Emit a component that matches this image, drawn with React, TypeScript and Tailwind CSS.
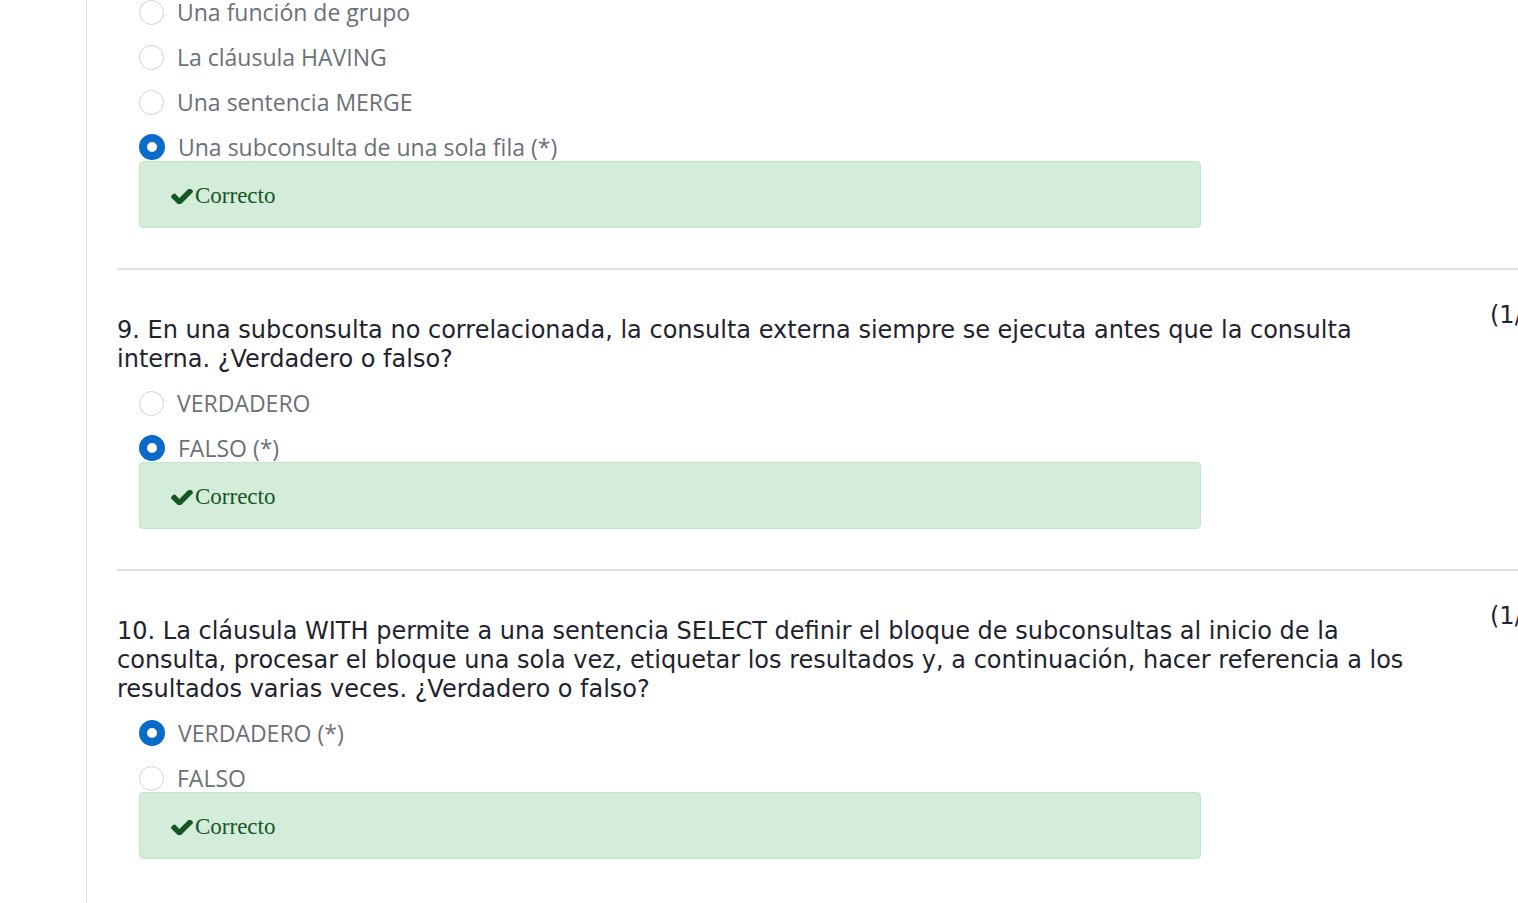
import React from 'react';

type Option = { label: string; checked?: boolean };

const qFont = { fontFamily: '"DejaVu Sans", Verdana, sans-serif' };
const optFont = { fontFamily: '"Open Sans", "Liberation Sans", sans-serif' };

const Radio = ({ checked }: { checked?: boolean }) =>
  checked ? (
    <span className="w-[26px] h-[26px] rounded-full border-[8px] border-[#0b6bcb] bg-white shrink-0" />
  ) : (
    <span className="w-[25px] h-[25px] rounded-full border-[1.5px] border-[#d3d3d3] bg-white shrink-0" />
  );

const OptionRow = ({ label, checked }: Option) => (
  <div className="flex items-center h-[28px] mt-[17px] pl-[22px] gap-[13px]">
    <Radio checked={checked} />
    <span className="text-[23px] text-[#6c7078] whitespace-nowrap" style={optFont}>
      {label}
    </span>
  </div>
);

const Correct = () => (
  <div className="ml-[22px] w-[1062px] h-[67px] flex items-center pl-[31px] pt-[3px] bg-[#d4edda] border border-[#c3e6cb] rounded-[4px]">
    <svg width="22" height="15" viewBox="120 400 1552 1032" className="shrink-0">
      <path
        fill="#155724"
        d="M1671 566q0 40-28 68l-724 724-136 136q-28 28-68 28t-68-28l-136-136-362-362q-28-28-28-68t28-68l136-136q28-28 68-28t68 28l294 295 656-657q28-28 68-28t68 28l136 136q28 28 28 68z"
      />
    </svg>
    <span className="ml-[2px] text-[23px] text-[#155724]" style={{ fontFamily: '"Liberation Serif", serif' }}>
      Correcto
    </span>
  </div>
);

const Question = ({ text, options }: { text: string; options: Option[] }) => (
  <section>
    <hr className="mt-[40px] border-0 h-[2px] bg-[#dee2e6]" />
    <div className="flex gap-[53px]">
      <p className="w-[1320px] shrink-0 pt-[46px] -mb-[2px] text-[24px] leading-[29px] text-[#1f2330]" style={qFont}>
        {text}
      </p>
      <div className="shrink-0 pt-[31px] text-[24px] leading-[29px] text-[#1f2330] whitespace-nowrap" style={qFont}>
        (1/1) Puntos
      </div>
    </div>
    {options.map((o) => (
      <OptionRow key={o.label} {...o} />
    ))}
    <Correct />
  </section>
);

export default function App() {
  return (
    <div className="flex h-[903px] w-[1518px] overflow-hidden bg-white">
      <aside className="w-[87px] shrink-0 border-r border-[#dcdcdc]" />
      <main className="pl-[30px] shrink-0 w-[1700px]">
        <div className="-mt-[19px]">
          <OptionRow label="Una función de grupo" />
          <OptionRow label="La cláusula HAVING" />
          <OptionRow label="Una sentencia MERGE" />
          <OptionRow label="Una subconsulta de una sola fila (*)" checked />
          <Correct />
        </div>
        <Question
          text="9. En una subconsulta no correlacionada, la consulta externa siempre se ejecuta antes que la consulta interna. ¿Verdadero o falso?"
          options={[{ label: 'VERDADERO' }, { label: 'FALSO (*)', checked: true }]}
        />
        <Question
          text="10. La cláusula WITH permite a una sentencia SELECT definir el bloque de subconsultas al inicio de la consulta, procesar el bloque una sola vez, etiquetar los resultados y, a continuación, hacer referencia a los resultados varias veces. ¿Verdadero o falso?"
          options={[{ label: 'VERDADERO (*)', checked: true }, { label: 'FALSO' }]}
        />
      </main>
    </div>
  );
}
